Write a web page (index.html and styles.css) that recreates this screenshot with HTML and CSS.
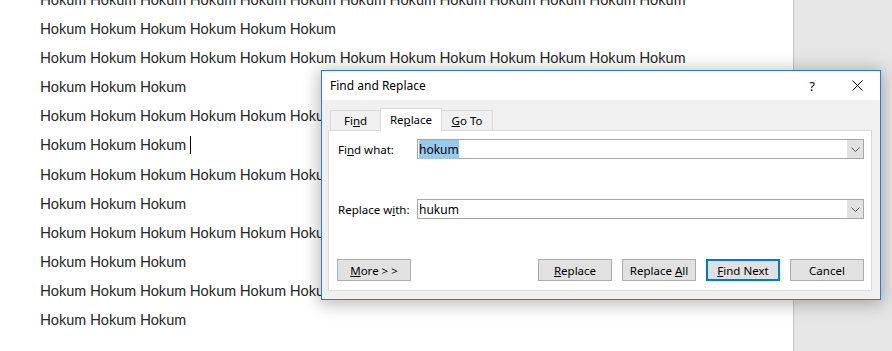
FILE: index.html
```html
<!DOCTYPE html>
<html lang="en">

<head>
    <meta charset="UTF-8">
    <title>Find and Replace</title>
    <link rel="stylesheet" href="styles.css">
</head>

<body>
    <!-- Document page -->
    <div class="page">
        <div class="doc">
            <p>Hokum Hokum Hokum Hokum Hokum Hokum Hokum Hokum Hokum Hokum Hokum Hokum Hokum</p>
            <p>Hokum Hokum Hokum Hokum Hokum Hokum</p>
            <p>Hokum Hokum Hokum Hokum Hokum Hokum Hokum Hokum Hokum Hokum Hokum Hokum Hokum</p>
            <p>Hokum Hokum Hokum</p>
            <p>Hokum Hokum Hokum Hokum Hokum Hokum Hokum Hokum Hokum Hokum Hokum Hokum Hokum</p>
            <p>Hokum Hokum Hokum<span class="caret"></span></p>
            <p>Hokum Hokum Hokum Hokum Hokum Hokum Hokum Hokum Hokum Hokum Hokum Hokum Hokum</p>
            <p>Hokum Hokum Hokum</p>
            <p>Hokum Hokum Hokum Hokum Hokum Hokum Hokum Hokum Hokum Hokum Hokum Hokum Hokum</p>
            <p>Hokum Hokum Hokum</p>
            <p>Hokum Hokum Hokum Hokum Hokum Hokum Hokum Hokum Hokum Hokum Hokum Hokum Hokum</p>
            <p>Hokum Hokum Hokum</p>
        </div>
    </div>

    <!-- Find and Replace dialog -->
    <div class="dialog">
        <div class="titlebar">
            <span class="title">Find and Replace</span>
            <span class="help">?</span>
            <span class="close">
                <svg width="11" height="11" viewBox="0 0 11 11">
                    <path d="M0.5 0.5 L10.5 10.5 M10.5 0.5 L0.5 10.5" stroke="#000" stroke-width="1" fill="none" />
                </svg>
            </span>
        </div>

        <div class="dialog-body">
            <div class="tabs">
                <div class="tab tab-find">Fi<u>n</u>d</div>
                <div class="tab tab-replace active">Re<u>p</u>lace</div>
                <div class="tab tab-goto"><u>G</u>o To</div>
            </div>

            <div class="panel">
                <div class="field">
                    <label>Fi<u>n</u>d what:</label>
                    <div class="combo">
                        <span class="value"><span class="selected">hokum</span></span>
                        <span class="drop">
                            <svg width="9" height="5" viewBox="0 0 9 5">
                                <path d="M0.5 0.5 L4.5 4.5 L8.5 0.5" stroke="#555" stroke-width="1" fill="none" />
                            </svg>
                        </span>
                    </div>
                </div>

                <div class="field">
                    <label>Replace w<u>i</u>th:</label>
                    <div class="combo">
                        <span class="value">hukum</span>
                        <span class="drop">
                            <svg width="9" height="5" viewBox="0 0 9 5">
                                <path d="M0.5 0.5 L4.5 4.5 L8.5 0.5" stroke="#555" stroke-width="1" fill="none" />
                            </svg>
                        </span>
                    </div>
                </div>

                <div class="buttons">
                    <button class="btn"><u>M</u>ore &gt; &gt;</button>
                    <div class="btn-group">
                        <button class="btn"><u>R</u>eplace</button>
                        <button class="btn">Replace <u>A</u>ll</button>
                        <button class="btn default"><u>F</u>ind Next</button>
                        <button class="btn">Cancel</button>
                    </div>
                </div>
            </div>
        </div>
    </div>
</body>

</html>
```

FILE: styles.css
```css
body {
    margin: 0;
    background-color: #e6e6e6;
    overflow: hidden;
    height: 351px;
}

/* Document page */
.page {
    width: 793px;
    height: 351px;
    background: white;
    border-right: 1px solid #c6c6c6;
    overflow: hidden;
}

.doc {
    margin-top: -15px;
    padding-left: 40px;
    font-family: Lato, "Liberation Sans", sans-serif;
    font-size: 14.45px;
    color: #262626;
}

.doc p {
    margin: 0;
    line-height: 29.1px;
    white-space: nowrap;
}

.caret {
    display: inline-block;
    width: 1px;
    height: 18px;
    margin-left: 4px;
    background: #000;
    vertical-align: -4px;
}

/* Dialog */
.dialog {
    position: absolute;
    left: 321px;
    top: 70px;
    width: 558px;
    height: 228px;
    border: 1px solid #1883d7;
    background: #f0f0f0;
    box-shadow: 0 2px 16px 2px rgba(0, 0, 0, 0.28);
    font-family: "Noto Sans", sans-serif;
    font-size: 11.5px;
    color: #000;
    display: flex;
    flex-direction: column;
}

.titlebar {
    height: 29px;
    background: white;
    display: flex;
    align-items: center;
    padding-left: 8px;
}

.title {
    flex: 1;
    font-size: 12px;
}

.help {
    width: 20px;
    text-align: center;
    font-size: 13px;
    margin-right: 25px;
}

.close {
    width: 20px;
    display: flex;
    justify-content: center;
    margin-right: 13px;
}

.dialog-body {
    padding: 8px 8px 8px 6px;
}

/* Tabs */
.tabs {
    display: flex;
    padding-left: 2px;
    height: 22px;
    align-items: flex-end;
}

.tab {
    box-sizing: border-box;
    height: 20px;
    border: 1px solid #d9d9d9;
    border-bottom: none;
    background: #f0f0f0;
    display: flex;
    align-items: center;
    justify-content: center;
    margin-right: -1px;
    white-space: nowrap;
}

.tab-find {
    width: 51px;
}

.tab-replace {
    width: 62px;
}

.tab-goto {
    width: 52px;
}

.tab.active {
    height: 23px;
    background: white;
    position: relative;
    z-index: 1;
    margin-bottom: -1px;
    padding-bottom: 2px;
}

.panel {
    background: white;
    border: 1px solid #d9d9d9;
    padding: 8px 7px 9px 8px;
    display: flex;
    flex-direction: column;
    gap: 40px;
}

.field {
    display: flex;
    align-items: center;
    height: 20px;
}

.field label {
    width: 79px;
    padding-left: 1px;
}

.combo {
    flex: 1;
    height: 18px;
    border: 1px solid #a6a6a6;
    display: flex;
    align-items: center;
}

.value {
    flex: 1;
    padding-left: 1px;
    font-size: 12px;
}

.selected {
    background: #99c9ef;
    padding: 1px 0;
}

.drop {
    width: 16px;
    height: 18px;
    background: #e1e1e1;
    display: flex;
    align-items: center;
    justify-content: center;
}

/* Buttons */
.buttons {
    display: flex;
    justify-content: space-between;
}

.btn-group {
    display: flex;
    gap: 10px;
}

.btn {
    width: 74px;
    height: 22px;
    margin: 0;
    padding: 0;
    background: #e1e1e1;
    border: 1px solid #adadad;
    font-family: "Noto Sans", sans-serif;
    font-size: 11.5px;
    color: #000;
}

.btn.default {
    border: 2px solid #0078d7;
}
```
